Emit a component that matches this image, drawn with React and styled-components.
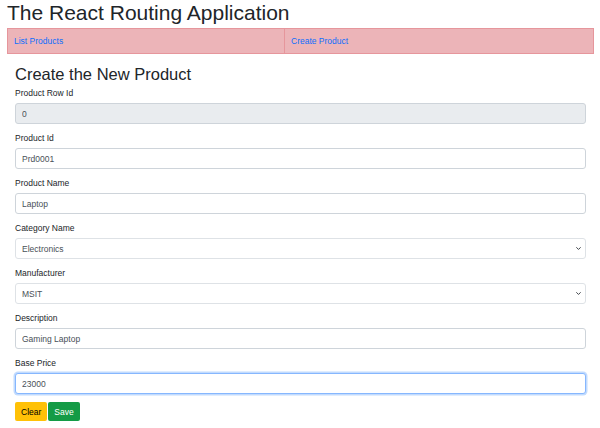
import React, { useState } from 'react';
import styled, { createGlobalStyle } from 'styled-components';

const GlobalStyle = createGlobalStyle`
    body {
        margin: 0;
        background: #fff;
        font-family: "Liberation Sans", Arial, sans-serif;
        color: #212529;
    }
`;

const categories = ['Electronics', 'Electrical', 'Food', 'Fashion'];
const manufacturers = ['MSIT', 'HP', 'Dell', 'Lenovo'];

const emptyProduct = {
    ProductRowId: 0,
    ProductId: '',
    ProductName: '',
    CategoryName: categories[0],
    Manufacturer: manufacturers[0],
    Description: '',
    BasePrice: 0
};

const CreateProduct = () => {
    const [product, setProduct] = useState({
        ProductRowId: 0,
        ProductId: 'Prd0001',
        ProductName: 'Laptop',
        CategoryName: 'Electronics',
        Manufacturer: 'MSIT',
        Description: 'Gaming Laptop',
        BasePrice: 23000
    });

    const handleChange = (e) => {
        setProduct({ ...product, [e.target.name]: e.target.value });
    };

    return (<Form onSubmit={(e) => e.preventDefault()}>
        <Heading>Create the New Product</Heading>
        <Field>
            <Label>Product Row Id</Label>
            <Input name="ProductRowId" value={product.ProductRowId} readOnly disabled />
        </Field>
        <Field>
            <Label>Product Id</Label>
            <Input name="ProductId" value={product.ProductId} onChange={handleChange} />
        </Field>
        <Field>
            <Label>Product Name</Label>
            <Input name="ProductName" value={product.ProductName} onChange={handleChange} />
        </Field>
        <Field>
            <Label>Category Name</Label>
            <SelectWrap>
                <Select name="CategoryName" value={product.CategoryName} onChange={handleChange}>
                    {categories.map((c) => <option key={c} value={c}>{c}</option>)}
                </Select>
                <Chevron />
            </SelectWrap>
        </Field>
        <Field>
            <Label>Manufacturer</Label>
            <SelectWrap>
                <Select name="Manufacturer" value={product.Manufacturer} onChange={handleChange}>
                    {manufacturers.map((m) => <option key={m} value={m}>{m}</option>)}
                </Select>
                <Chevron />
            </SelectWrap>
        </Field>
        <Field>
            <Label>Description</Label>
            <Input name="Description" value={product.Description} onChange={handleChange} />
        </Field>
        <Field>
            <Label>Base Price</Label>
            <Input name="BasePrice" value={product.BasePrice} onChange={handleChange} $focused />
        </Field>
        <Buttons>
            <Button type="button" $variant="warning" onClick={() => setProduct(emptyProduct)}>Clear</Button>
            <Button type="submit" $variant="success">Save</Button>
        </Buttons>
    </Form>);
};

const Chevron = () => (
    <ChevronIcon width="7" height="5" viewBox="0 0 16 16">
        <path fill="none" stroke="#343a40" strokeLinecap="round" strokeLinejoin="round" strokeWidth="3" d="M2 5l6 6 6-6" />
    </ChevronIcon>
);

export default function App() {
    return (<Page>
        <GlobalStyle />
        <Title>The React Routing Application</Title>
        <Nav>
            <NavCell><NavLink href="#">List Products</NavLink></NavCell>
            <NavCell><NavLink href="#">Create Product</NavLink></NavCell>
        </Nav>
        <CreateProduct />
    </Page>);
}

const Page = styled.div`
    padding: 0 6px 0 7px;
`;

const Title = styled.h1`
    margin: 0 0 2px;
    font-size: 21px;
    line-height: 26px;
    font-weight: 400;
`;

const Nav = styled.div`
    display: grid;
    grid-template-columns: 276px 1fr;
    height: 26px;
    box-sizing: border-box;
    border: 1px solid #e6969c;
    background-color: #ecb4b8;
`;

const NavCell = styled.div`
    display: flex;
    align-items: center;
    padding-left: 6px;
    & + & {
        border-left: 1px solid #e6969c;
    }
`;

const NavLink = styled.a`
    font-size: 8.5px;
    color: #0d6efd;
    text-decoration: none;
`;

const Form = styled.form`
    padding: 0 8px 0 8px;
`;

const Heading = styled.h2`
    margin: 10px 0 3px;
    font-size: 16.5px;
    line-height: 20px;
    font-weight: 400;
`;

const Field = styled.div`
    margin-bottom: 8px;
`;

const Label = styled.label`
    display: block;
    font-size: 8.5px;
    line-height: 12px;
    margin-bottom: 4px;
`;

const Input = styled.input`
    display: block;
    width: 100%;
    height: 21px;
    box-sizing: border-box;
    padding: 0 6px;
    font-family: inherit;
    font-size: 8.5px;
    color: #495057;
    background-color: #fff;
    border: 1px solid ${(p) => (p.$focused ? '#86b7fe' : '#ced4da')};
    border-radius: 3px;
    box-shadow: ${(p) => (p.$focused ? '0 0 0 1.5px rgba(13, 110, 253, 0.25)' : 'none')};
    outline: none;

    &:disabled {
        background-color: #e9ecef;
        opacity: 1;
    }
`;

const SelectWrap = styled.div`
    position: relative;
`;

const Select = styled.select`
    display: block;
    width: 100%;
    height: 21px;
    box-sizing: border-box;
    padding: 0 6px;
    font-family: inherit;
    font-size: 8.5px;
    color: #495057;
    background-color: #fff;
    border: 1px solid #dee2e6;
    border-radius: 3px;
    appearance: none;
    outline: none;
`;

const ChevronIcon = styled.svg`
    position: absolute;
    right: 4px;
    top: 8px;
    pointer-events: none;
`;

const Buttons = styled.div`
    display: flex;
    gap: 1px;
    margin-top: 1px;
`;

const Button = styled.button`
    height: 19px;
    padding: 0 6px;
    font-family: inherit;
    font-size: 8.5px;
    border: none;
    border-radius: 2px;
    cursor: pointer;
    color: ${(p) => (p.$variant === 'warning' ? '#000' : '#fff')};
    background-color: ${(p) => (p.$variant === 'warning' ? '#ffc107' : '#149b46')};
`;
